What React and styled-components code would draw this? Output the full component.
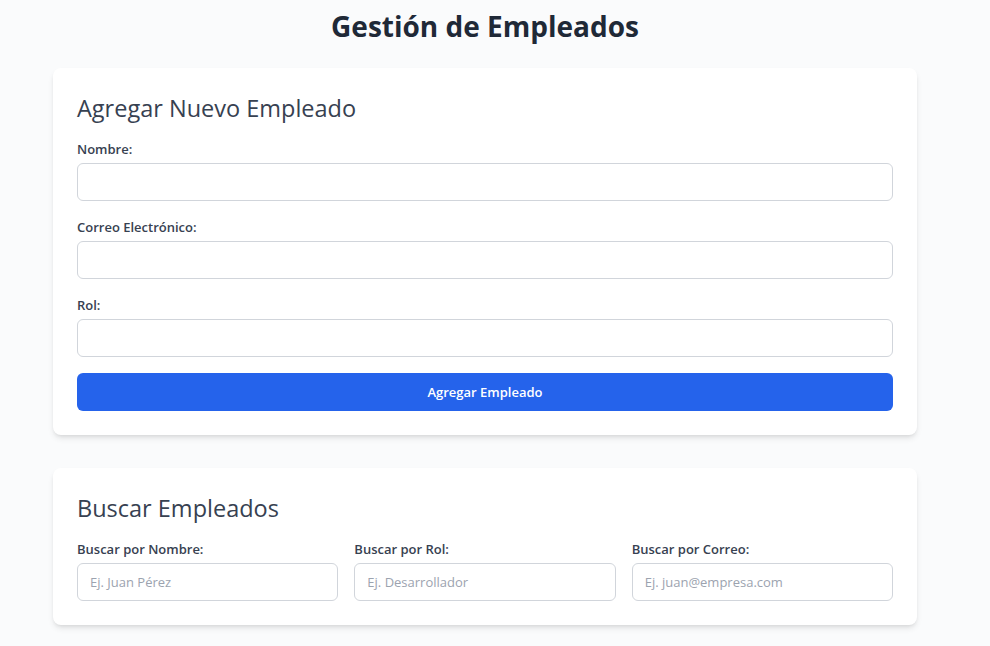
import React from "react";
import styled, { createGlobalStyle } from "styled-components";

const Global = createGlobalStyle`
  html, body { margin: 0; padding: 0; background: #fafbfc; }
  body { font-family: "Open Sans", "Noto Sans", sans-serif; color: #1f2937; }
  * { box-sizing: border-box; }
`;

const Page = styled.div`
  width: 970px;
  padding: 8px 0 24px;
`;

const Container = styled.div`
  width: 864px;
  margin: 0 auto;
`;

const Title = styled.h1`
  margin: 0 0 24px;
  font-size: 28px;
  line-height: 36px;
  font-weight: 700;
  text-align: center;
  color: #1f2937;
`;

const Card = styled.section`
  background: #fff;
  border-radius: 8px;
  box-shadow: 0 4px 6px -1px rgba(0, 0, 0, 0.1), 0 2px 4px -2px rgba(0, 0, 0, 0.1);
  padding: 24px;
  margin-bottom: ${(p) => p.$mb || 0}px;
`;

const CardTitle = styled.h2`
  margin: 0 0 15px;
  font-size: 23.5px;
  line-height: 32px;
  font-weight: 500;
  color: #374151;
`;

const Field = styled.div`
  margin-bottom: 16px;
`;

const Label = styled.label`
  display: block;
  margin-bottom: 4px;
  font-size: 13px;
  line-height: 20px;
  font-weight: 600;
  color: #374151;
`;

const Input = styled.input`
  display: block;
  width: 100%;
  height: 38px;
  padding: 8px 12px;
  border: 1px solid #d1d5db;
  border-radius: 6px;
  font-family: inherit;
  font-size: 13px;
  color: #1f2937;
  background: #fff;
  outline: none;
  &::placeholder { color: #9ca3af; }
`;

const Button = styled.button`
  display: block;
  width: 100%;
  height: 38px;
  border: none;
  border-radius: 6px;
  background: #2563eb;
  color: #fff;
  font-family: inherit;
  font-size: 13px;
  font-weight: 600;
  cursor: pointer;
`;

const Grid = styled.div`
  display: grid;
  grid-template-columns: repeat(3, 1fr);
  gap: 16px;
`;

export default function App() {
  return (
    <Page>
      <Global />
      <Container>
        <Title>Gestión de Empleados</Title>
        <Card $mb={33}>
          <CardTitle>Agregar Nuevo Empleado</CardTitle>
          <Field>
            <Label>Nombre:</Label>
            <Input type="text" />
          </Field>
          <Field>
            <Label>Correo Electrónico:</Label>
            <Input type="email" />
          </Field>
          <Field>
            <Label>Rol:</Label>
            <Input type="text" />
          </Field>
          <Button>Agregar Empleado</Button>
        </Card>
        <Card>
          <CardTitle>Buscar Empleados</CardTitle>
          <Grid>
            <div>
              <Label>Buscar por Nombre:</Label>
              <Input placeholder="Ej. Juan Pérez" />
            </div>
            <div>
              <Label>Buscar por Rol:</Label>
              <Input placeholder="Ej. Desarrollador" />
            </div>
            <div>
              <Label>Buscar por Correo:</Label>
              <Input placeholder="Ej. juan@empresa.com" />
            </div>
          </Grid>
        </Card>
      </Container>
    </Page>
  );
}
